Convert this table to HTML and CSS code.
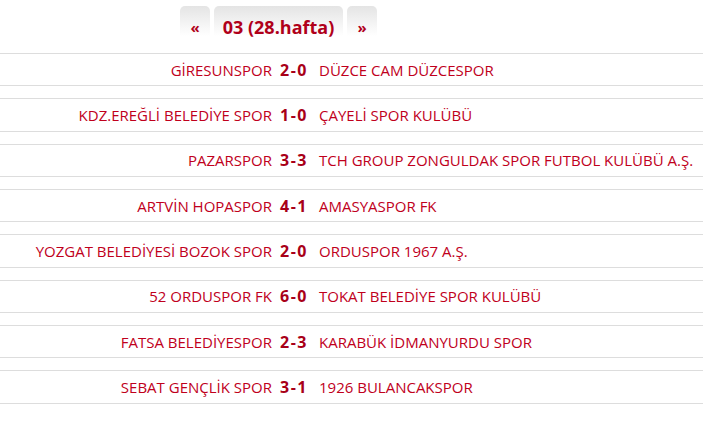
FILE: index.html
```html
<!DOCTYPE html>
<html lang="tr">
<head>
<meta charset="utf-8">
<link rel="stylesheet" href="styles.css">
</head>
<body>
<div class="fixture">
  <div class="weeknav">
    <a class="tab tab-arrow">«</a>
    <a class="tab tab-week">03 (28.hafta)</a>
    <a class="tab tab-arrow">»</a>
  </div>
  <div class="matches">
    <div class="match"><span class="home">GİRESUNSPOR</span><span class="score">2-0</span><span class="away">DÜZCE CAM DÜZCESPOR</span></div>
    <div class="match"><span class="home">KDZ.EREĞLİ BELEDİYE SPOR</span><span class="score">1-0</span><span class="away">ÇAYELİ SPOR KULÜBÜ</span></div>
    <div class="match"><span class="home">PAZARSPOR</span><span class="score">3-3</span><span class="away">TCH GROUP ZONGULDAK SPOR FUTBOL KULÜBÜ A.Ş.</span></div>
    <div class="match"><span class="home">ARTVİN HOPASPOR</span><span class="score">4-1</span><span class="away">AMASYASPOR FK</span></div>
    <div class="match"><span class="home">YOZGAT BELEDİYESİ BOZOK SPOR</span><span class="score">2-0</span><span class="away">ORDUSPOR 1967 A.Ş.</span></div>
    <div class="match"><span class="home">52 ORDUSPOR FK</span><span class="score">6-0</span><span class="away">TOKAT BELEDİYE SPOR KULÜBÜ</span></div>
    <div class="match"><span class="home">FATSA BELEDİYESPOR</span><span class="score">2-3</span><span class="away">KARABÜK İDMANYURDU SPOR</span></div>
    <div class="match"><span class="home">SEBAT GENÇLİK SPOR</span><span class="score">3-1</span><span class="away">1926 BULANCAKSPOR</span></div>
  </div>
</div>
</body>
</html>
```
FILE: styles.css
```css
html, body {
  margin: 0;
  padding: 0;
  background: #fff;
}
body {
  font-family: "Open Sans", "Liberation Sans", sans-serif;
  color: #c0001c;
  width: 703px;
  overflow: hidden;
}
.weeknav {
  display: flex;
  gap: 4px;
  padding: 6px 0 0 180px;
  height: 53px;
  box-sizing: border-box;
}
.tab {
  display: block;
  height: 30px;
  border-radius: 5px 5px 0 0;
  background: linear-gradient(to bottom, #e4e4e4 0%, #f3f3f3 55%, #ffffff 100%);
  color: #b0001a;
  font-weight: bold;
  text-align: center;
  box-sizing: border-box;
  padding-top: 10px;
  line-height: 22px;
}
.tab-arrow {
  width: 30px;
  font-size: 15px;
}
.tab-week {
  width: 129px;
  font-size: 18px;
}
.matches {
  display: flex;
  flex-direction: column;
  gap: 12px;
}
.match {
  display: grid;
  grid-template-columns: 272px 44px 1fr;
  border-top: 1px solid #dddddd;
  border-bottom: 1px solid #dddddd;
  height: 33.33px;
  box-sizing: border-box;
  align-items: center;
  font-size: 15px;
  white-space: nowrap;
}
.home {
  text-align: right;
}
.score {
  text-align: center;
  font-weight: bold;
  font-size: 16px;
  letter-spacing: 1.5px;
  color: #a80018;
}
.away {
  padding-left: 3px;
}
```
